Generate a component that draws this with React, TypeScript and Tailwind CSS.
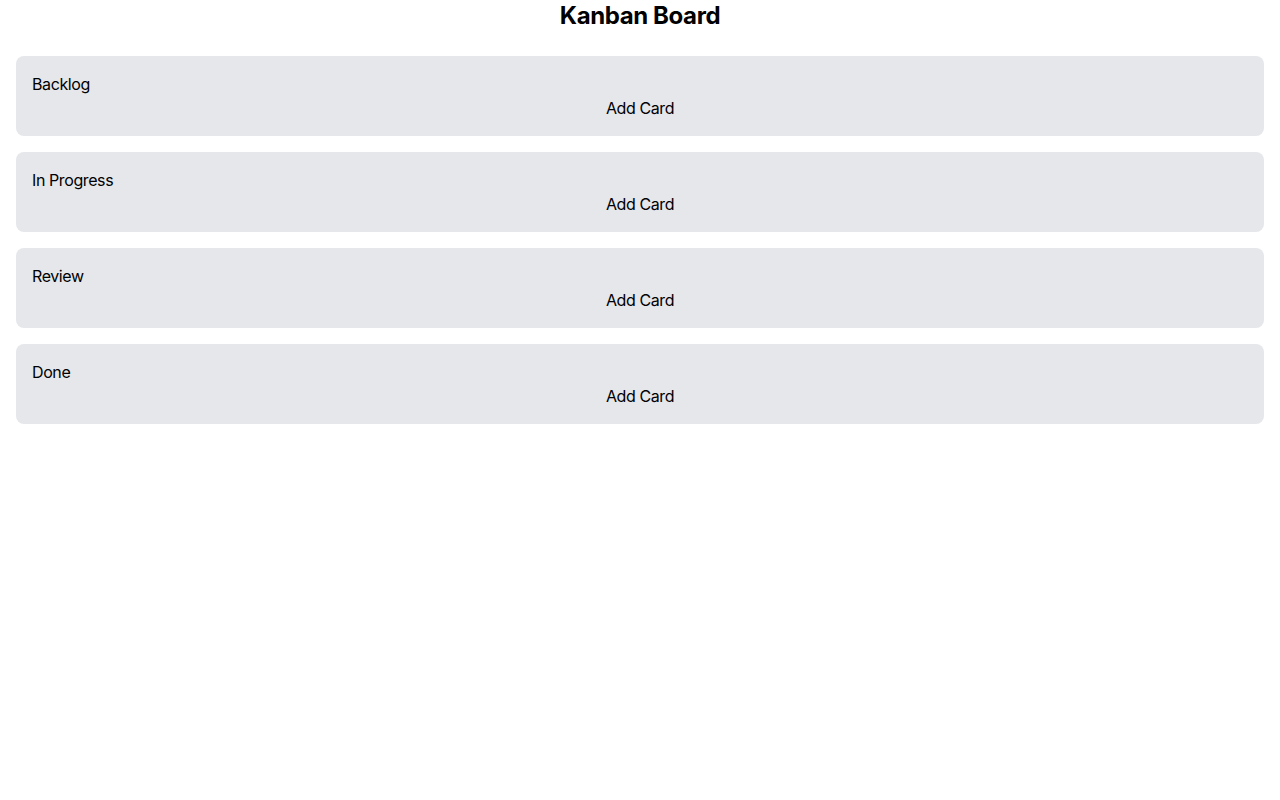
import React from 'react';

const columns = ['Backlog', 'In Progress', 'Review', 'Done'];

const App: React.FC = () => {
  return (
    <div className="min-h-screen bg-white text-black font-['Inter',sans-serif] tracking-tight">
      <h1 className="text-2xl font-bold text-center mb-2">Kanban Board</h1>
      <div className="p-4 flex flex-col gap-4">
        {columns.map((name) => (
          <div key={name} className="bg-gray-200 rounded-lg p-4">
            <h2 className="text-base">{name}</h2>
            <button className="block w-full text-center text-base">Add Card</button>
          </div>
        ))}
      </div>
    </div>
  );
};

export default App;
